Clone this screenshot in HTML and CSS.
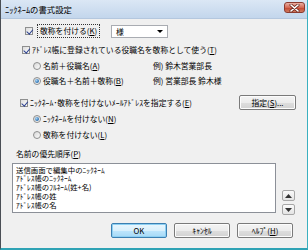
FILE: index.html
```html
<!DOCTYPE html>
<html lang="ja">
<head>
<meta charset="utf-8">
<link rel="stylesheet" href="styles.css">
</head>
<body>
<div class="win">
  <div class="titlebar">
    <span class="title">ﾆｯｸﾈｰﾑの書式設定</span>
    <span class="close"><svg width="11" height="8" viewBox="0 0 11 8"><path d="M2 1 L9 7 M9 1 L2 7" stroke="#6a2a22" stroke-width="3" stroke-linecap="round"/><path d="M2 1 L9 7 M9 1 L2 7" stroke="#fff" stroke-width="1.6" stroke-linecap="round"/></svg></span>
  </div>
  <div class="client">
    <div class="row r1">
      <span class="cb on"></span>
      <span class="lbl focus">敬称を付ける(<u>K</u>)</span>
      <span class="combo"><span>様</span><span class="arrow"></span></span>
    </div>
    <div class="row r2">
      <span class="cb on"></span>
      <span class="lbl">ｱﾄﾞﾚｽ帳に登録されている役職名を敬称として使う(<u>T</u>)</span>
    </div>
    <div class="row r3">
      <span class="rb"></span>
      <span class="lbl opt">名前＋役職名(<u>A</u>)</span>
      <span class="lbl">例) 鈴木営業部長</span>
    </div>
    <div class="row r4">
      <span class="rb on"></span>
      <span class="lbl opt">役職名＋名前＋敬称(<u>B</u>)</span>
      <span class="lbl">例) 営業部長 鈴木様</span>
    </div>
    <div class="row r5">
      <span class="cb on"></span>
      <span class="lbl">ﾆｯｸﾈｰﾑ･敬称を付けないﾒｰﾙｱﾄﾞﾚｽを指定する(<u>E</u>)</span>
      <span class="btn spec">指定(<u>S</u>)...</span>
    </div>
    <div class="row r6">
      <span class="rb on"></span>
      <span class="lbl">ﾆｯｸﾈｰﾑを付けない(<u>N</u>)</span>
    </div>
    <div class="row r7">
      <span class="rb"></span>
      <span class="lbl">敬称を付けない(<u>L</u>)</span>
    </div>
    <div class="row r8">
      <span class="lbl">名前の優先順序(<u>P</u>)</span>
    </div>
    <div class="listrow">
      <div class="listbox">
        <div>送信画面で編集中のﾆｯｸﾈｰﾑ</div>
        <div>ｱﾄﾞﾚｽ帳のﾆｯｸﾈｰﾑ</div>
        <div>ｱﾄﾞﾚｽ帳のﾌﾙﾈｰﾑ(姓+名)</div>
        <div>ｱﾄﾞﾚｽ帳の姓</div>
        <div>ｱﾄﾞﾚｽ帳の名</div>
      </div>
      <div class="spin">
        <span class="sbtn"><svg width="7" height="4" viewBox="0 0 7 4"><path d="M0 4 L3.5 0 L7 4 Z" fill="#333"/></svg></span>
        <span class="sbtn"><svg width="7" height="4" viewBox="0 0 7 4"><path d="M0 0 L3.5 4 L7 0 Z" fill="#333"/></svg></span>
      </div>
    </div>
    <div class="btnrow">
      <span class="btn def">OK</span>
      <span class="btn">ｷｬﾝｾﾙ</span>
      <span class="btn">ﾍﾙﾌﾟ(<u>H</u>)</span>
    </div>
  </div>
</div>
</body>
</html>
```

FILE: styles.css
```css
* { box-sizing: border-box; }
html, body { margin: 0; padding: 0; }
body {
  width: 308px;
  height: 250px;
  overflow: hidden;
  background: #f0f0f0;
  font-family: "Noto Sans CJK JP", "Noto Sans", sans-serif;
  font-size: 7.8px;
  color: #000;
}
.win {
  width: 308px;
  height: 250px;
  border-left: 1px solid #4a4f55;
  border-right: 1px solid #3ab0c0;
  border-bottom: 2px solid #2fa3b5;
  background: #f0f0f0;
  display: flex;
  flex-direction: column;
}
.titlebar {
  height: 19px;
  flex: none;
  display: flex;
  align-items: center;
  justify-content: space-between;
  padding: 0 2px 0 4px;
  background: linear-gradient(#dbe7f5, #c3d6ec);
  border-bottom: 1px solid #b4c7de;
}
.title { font-size: 8.4px; line-height: 10px; margin-top: -1px; }
.close {
  width: 21px;
  height: 11px;
  margin-top: -3px;
  border: 1px solid #8c3b2f;
  border-radius: 3px;
  background: linear-gradient(#eab0a4, #d56a55 50%, #c2432e 51%, #d07a5e);
  display: flex;
  align-items: center;
  justify-content: center;
}
.client { flex: 1; display: flex; flex-direction: column; padding-top: 5px; }
.row { display: flex; align-items: center; height: 14px; flex: none; }
.lbl { white-space: nowrap; line-height: 10px; }
u { text-decoration: underline; text-underline-offset: 1px; }

.cb {
  width: 8px; height: 8px; flex: none;
  border: 1px solid #8e8f8f;
  background: linear-gradient(135deg, #dcdcdc, #fbfbfb);
  position: relative;
}
.cb.on::after {
  content: "";
  position: absolute;
  left: 1.5px; top: 0px;
  width: 2.5px; height: 4.5px;
  border: solid #2a3f8f;
  border-width: 0 1.5px 1.5px 0;
  transform: rotate(40deg);
}
.rb {
  width: 8px; height: 8px; flex: none;
  border: 1px solid #8e8f8f;
  border-radius: 50%;
  background: linear-gradient(135deg, #d8d8d8, #fbfbfb);
  display: flex; align-items: center; justify-content: center;
}
.rb.on::after {
  content: "";
  width: 4px; height: 4px; border-radius: 50%;
  background: radial-gradient(circle at 35% 35%, #a6d4f6, #2a6fb0 70%);
}

.r1 { padding-left: 24px; }
.r1 .cb { margin-right: 6px; }
.focus { outline: 1px dotted #333; outline-offset: 1px; padding: 0 1px; }
.combo {
  margin-left: 13px;
  width: 57px; height: 13px;
  background: #fff;
  border: 1px solid #a9acb2;
  display: flex; align-items: center; justify-content: space-between;
  padding: 0 4px 0 4px;
}
.arrow {
  width: 0; height: 0;
  border-left: 3px solid transparent;
  border-right: 3px solid transparent;
  border-top: 3px solid #000;
}
.r2 { margin-top: 5px; padding-left: 21px; }
.r2 .cb, .r5 .cb { margin-right: 2px; }
.r3 { margin-top: 2px; padding-left: 32px; }
.r4 { margin-top: 1px; padding-left: 32px; }
.r3 .rb, .r4 .rb, .r6 .rb, .r7 .rb { margin-right: 2px; }
.opt { width: 110px; }
.r5 { margin-top: 7px; height: 15px; padding-left: 19px; padding-right: 11px; }
.r6 { margin-top: 2px; padding-left: 32px; }
.r7 { margin-top: 2px; padding-left: 32px; }
.r8 { margin-top: 5px; padding-left: 15px; }

.btn {
  display: flex; align-items: center; justify-content: center;
  height: 15px;
  border: 1px solid #7a7a7a;
  border-radius: 2px;
  background: linear-gradient(#f4f4f4, #ececec 50%, #dedede 51%, #d2d2d2);
  box-shadow: inset 0 0 0 1px #fcfcfc;
  white-space: nowrap;
  line-height: 10px;
}
.spec { margin-left: auto; width: 57px; }

.listrow { display: flex; align-items: flex-start; margin-top: 2px; padding-left: 11px; height: 52px; flex: none; }
.listbox {
  width: 264px; height: 50px;
  background: #fff;
  border: 1px solid #8c9098;
  padding: 1.5px 3px;
  font-size: 7.4px;
  line-height: 8.8px;
  white-space: nowrap;
  overflow: hidden;
}
.spin {
  margin-left: 6px;
  height: 52px;
  display: flex; flex-direction: column; justify-content: flex-end; gap: 3px;
}
.sbtn {
  width: 13px; height: 11px;
  border: 1px solid #a7a7a7;
  border-radius: 2px;
  background: linear-gradient(#fafafa, #e4e4e4);
  display: flex; align-items: center; justify-content: center;
}
.btnrow {
  display: flex; justify-content: flex-end; gap: 7px;
  margin-top: 8px; padding-right: 14px;
}
.btnrow .btn { width: 56px; }
.btn.def {
  border-color: #3c7fb1;
  background: linear-gradient(#eaf6fd, #d9f0fc 50%, #bee6fd 51%, #a7d9f5);
  box-shadow: inset 0 0 0 1px #8ed0f3;
}
```
